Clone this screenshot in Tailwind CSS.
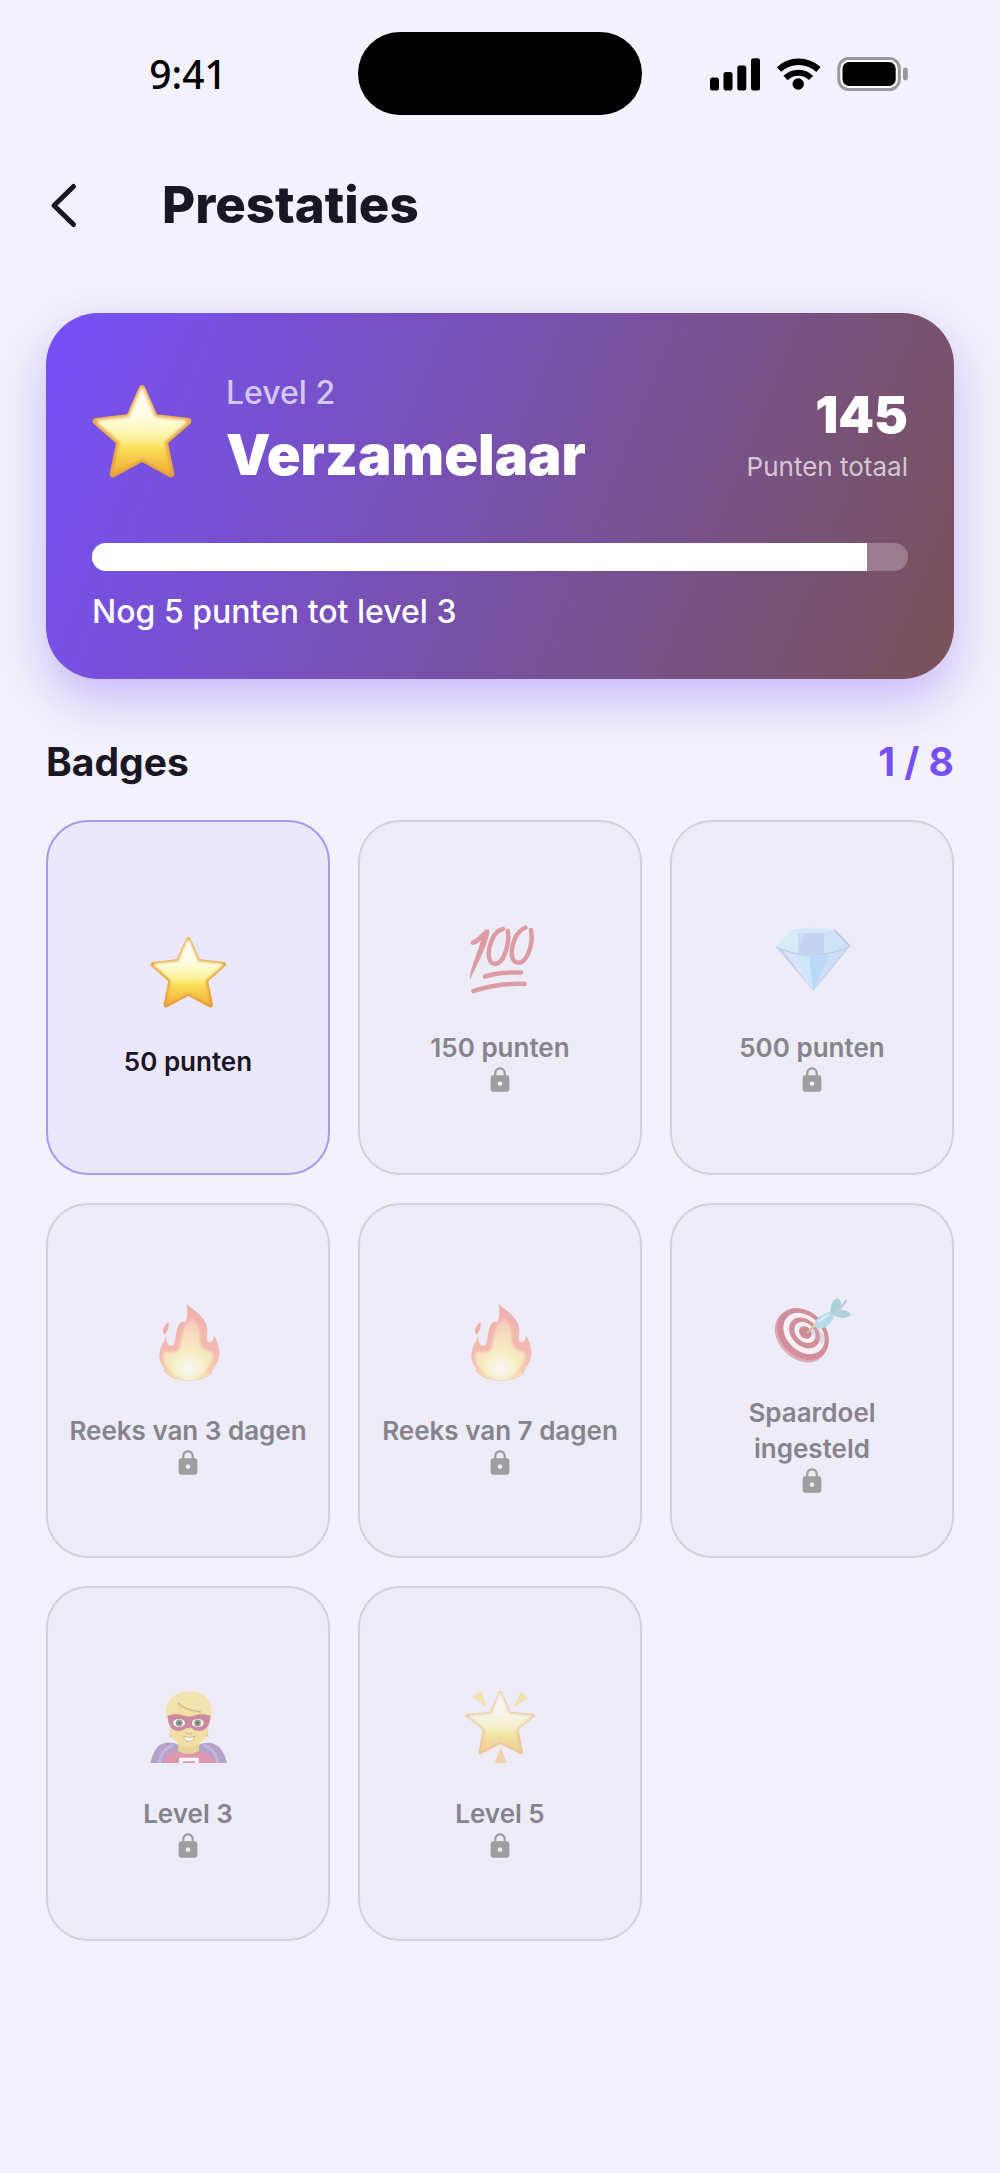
<!DOCTYPE html>
<html lang="nl">
<head>
    <meta charset="UTF-8">
    <meta name="viewport" content="width=device-width, initial-scale=1.0">
    <title>Prestaties</title>
    <script src="https://cdn.jsdelivr.net/npm/@tailwindcss/browser@4"></script>
</head>
<body class="min-h-screen bg-[#f3f1fb] font-['Inter',sans-serif] text-[#1a1625]">

    <!-- Status bar -->
    <div class="grid grid-cols-3 items-center gap-7 px-[46px] pt-8">
        <div class="text-center font-['Noto_Sans',sans-serif] text-[39px] leading-[83px] font-medium text-black">9:41</div>
        <div class="h-[83px] rounded-full bg-black"></div>
        <svg class="mx-auto h-[34px] w-[204px]" viewBox="0 0 204 34" aria-hidden="true">
            <rect x="0" y="20.5" width="9" height="13" rx="2.5"/>
            <rect x="13.5" y="15" width="9" height="18.5" rx="2.5"/>
            <rect x="27.3" y="8.5" width="9" height="25" rx="2.5"/>
            <rect x="41" y="1.3" width="9" height="32.2" rx="2.5"/>
            <path d="M69 12.5C80 2.2 97 2.2 108.5 12.5" fill="none" stroke="#000" stroke-width="6.5"/>
            <path d="M75.5 21C83 14 94 14 101 21" fill="none" stroke="#000" stroke-width="6"/>
            <circle cx="88.2" cy="27" r="5.7"/>
            <rect x="128.8" y="1.5" width="60.5" height="31" rx="10" fill="#fff" stroke="#9a999f" stroke-width="3"/>
            <rect x="132.5" y="5" width="53.2" height="24" rx="6.5"/>
            <rect x="193" y="10.5" width="4.8" height="13" rx="2.4" fill="#9a999f"/>
        </svg>
    </div>

    <!-- Header -->
    <header class="flex items-center gap-[84px] px-[46px] pt-[54px] pb-[72px]">
        <button type="button" aria-label="Terug" class="h-12 w-8 cursor-pointer">
            <svg class="h-12 w-8" viewBox="0 0 32 48" fill="none" stroke="#1a1625" stroke-width="5" stroke-linecap="round" stroke-linejoin="round">
                <path d="M27.5 5.5 8 24.500 27.5 43.5"/>
            </svg>
        </button>
        <h1 class="text-[51px] leading-[72px] font-extrabold">Prestaties</h1>
    </header>

    <main class="px-[46px] pb-14">

        <!-- Level card -->
        <section class="rounded-[52px] bg-linear-[112deg,#7650fa,#795257] p-[46px] text-white shadow-[0_20px_50px_rgba(118,80,250,0.35)]">
            <div class="flex h-36 items-center gap-8">
                <svg class="size-[102px] shrink-0" viewBox="1 0 78 78" aria-hidden="true">
                    <defs>
                        <linearGradient id="starFill" x1="0" y1="0" x2="0" y2="1">
                            <stop offset="0" stop-color="#fffdf0"/>
                            <stop offset=".35" stop-color="#fffde0"/>
                            <stop offset=".6" stop-color="#fdf29a"/>
                            <stop offset=".7" stop-color="#fae05a"/>
                            <stop offset="1" stop-color="#f2b23a"/>
                        </linearGradient>
                        <linearGradient id="starEdge" x1="0" y1="0" x2="0" y2="1">
                            <stop offset="0" stop-color="#edb04e"/>
                            <stop offset="1" stop-color="#e3a03c"/>
                        </linearGradient>
                        <filter id="soft" x="-10%" y="-10%" width="120%" height="120%">
                            <feGaussianBlur stdDeviation="1.3"/>
                        </filter>
                    </defs>
                    <g id="star" stroke-linejoin="round">
                        <path d="M39.3 6.500 49 28.5 74.5 31.5 56.5 47.5 61.5 72 39.3 60 17 72 22 47.5 4 31.5 29.500 28.5Z" fill="url(#starEdge)" stroke="url(#starEdge)" stroke-width="5"/>
                        <path d="M39.3 8 48.5 29.5 72 32 55 47 60 70 39.3 58.5 18.5 70 23.5 47 6.5 32 30 29.5Z" fill="url(#starFill)" stroke="url(#starFill)" stroke-width="3" filter="url(#soft)"/>
                    </g>
                </svg>
                <div class="min-w-0 flex-1">
                    <p class="mb-1 text-[32px] leading-11 font-medium text-white/70">Level 2</p>
                    <h2 class="text-[56px] leading-[72px] font-black">Verzamelaar</h2>
                </div>
                <div class="text-right">
                    <p class="text-[51px] leading-[72px] font-black">145</p>
                    <p class="text-[26px] leading-8 text-white/70">Punten totaal</p>
                </div>
            </div>
            <div class="mt-10 h-7 overflow-hidden rounded-full bg-white/25" role="progressbar" aria-label="Voortgang" aria-valuenow="95" aria-valuemin="0" aria-valuemax="100">
                <div class="h-full bg-white" style="width: 95%"></div>
            </div>
            <p class="mt-5 text-[32px] leading-[42px] font-medium">Nog 5 punten tot level 3</p>
        </section>

        <!-- Badges -->
        <div class="mt-[55px] mb-[30px] flex items-center justify-between">
            <h2 class="text-[39px] leading-14 font-bold">Badges</h2>
            <span class="text-[39px] leading-14 font-bold text-[#7650f5]">1 / 8</span>
        </div>

        <ul class="grid grid-cols-3 gap-7">
            <li class="flex aspect-[4/5] flex-col items-center justify-center rounded-[42px] border-2 border-[#a998f0] bg-[#ebe7fd] px-2 text-center">
                <div class="mb-4 flex h-28 items-center">
                    <svg class="size-[78px]" viewBox="0 0 78 78" aria-hidden="true"><use href="#star"/></svg>
                </div>
                <p class="text-[26px] leading-9 font-semibold">50 punten</p>
            </li>

            <li class="flex aspect-[4/5] flex-col items-center justify-center rounded-[42px] border-2 border-[#d3d1dc] bg-[#eeecf6] px-2 text-center text-[#85838d]">
                <div class="mb-4 flex h-28 items-center opacity-40">
                    <svg class="size-[78px]" viewBox="0 0 78 78" fill="none" stroke="#c4262a" stroke-width="4.5" stroke-linecap="round" stroke-linejoin="round" aria-hidden="true">
                        <path d="M9 60.5C8 53 14 41 20 21.5 18 23.5 15 25.5 12 26 9.5 26 9 23 11 21.500 17 19 20.500 13.500 25 10.500 27.500 9.500 29 12 28.200 14.500 24.500 30 18.500 41 13.500 51Z" fill="#c4262a" stroke="none"/>
                        <path d="M42 10C33 11.5 26.5 27 28 38 29.5 47 37 47 42 39 46.5 31 48 20 46.8 12"/>
                        <path d="M64.5 8.5C55 12 49.500 27 51 37 53 46 61 46 66 37 70 29 71.5 19 70 11"/>
                        <path d="M24 57.5C33 54.500 47 53 60 53.5"/>
                        <path d="M12.5 72C27 67.5 43 64 63.5 65"/>
                    </svg>
                </div>
                <p class="text-[26px] leading-9 font-semibold">150 punten</p>
                <svg class="size-7 text-[#9e9e9e]" viewBox="0 0 24 24" fill="currentColor" aria-label="Vergrendeld"><path id="lock" d="M18 8h-1V6c0-2.76-2.24-5-5-5S7 3.24 7 6v2H6c-1.1 0-2 .9-2 2v10c0 1.1.9 2 2 2h12c1.1 0 2-.9 2-2V10c0-1.1-.9-2-2-2zm-6 9c-1.1 0-2-.9-2-2s.9-2 2-2 2 .9 2 2-.9 2-2 2zm3.1-9H8.900V6c0-1.71 1.39-3.1 3.1-3.1s3.1 1.39 3.1 3.1v2z"/></svg>
            </li>

            <li class="flex aspect-[4/5] flex-col items-center justify-center rounded-[42px] border-2 border-[#d3d1dc] bg-[#eeecf6] px-2 text-center text-[#85838d]">
                <div class="mb-4 flex h-28 items-center opacity-45">
                    <svg class="size-[78px]" viewBox="0 0 78 78" aria-hidden="true">
                        <path d="M3 28 19.5 11Q40 6.5 61.5 11L77 27 40.3 72Z" fill="#a5dcfb"/>
                        <path d="M3 28 19.5 11 25.3 14.3V34Z" fill="#b4eef8"/>
                        <path d="M25.3 14.3H51V34.5Q38 36 25.3 34Z" fill="#8fb4ea"/>
                        <path d="M25.3 14.3 19.5 11Q40 6.5 61.5 11L51 14.3Z" fill="#b8e6fc"/>
                        <path d="M51 14.3 61.5 11 77 27Q65 33 51 34.5Z" fill="#a9d6fa"/>
                        <path d="M25.3 34 32 14.3 25.3 14.3Z" fill="#a4c9f2"/>
                        <path d="M3 28Q11 33 23.7 36L40.3 72Z" fill="#9cb0e4"/>
                        <path d="M10 31.5 23.7 36 40.3 72Z" fill="#bfdcf9"/>
                        <path d="M23.7 36Q40 38.5 56.3 36L40.3 72Z" fill="#7fc1fb"/>
                        <path d="M23.7 36 36 38 40.3 72Z" fill="#a8e1fb"/>
                        <path d="M56.3 36Q68 33 77 27L40.3 72Z" fill="#a3cdf8"/>
                        <path d="M72 31 77 27 40.3 72Z" fill="#8ca0dc"/>
                        <path d="M3 28Q40 45 77 27" fill="none" stroke="#829fce" stroke-width="1.1"/>
                        <path d="M61.5 11 77 27" stroke="#7688c4" stroke-width="1.1"/>
                    </svg>
                </div>
                <p class="text-[26px] leading-9 font-semibold">500 punten</p>
                <svg class="size-7 text-[#9e9e9e]" viewBox="0 0 24 24" fill="currentColor" aria-label="Vergrendeld"><use href="#lock"/></svg>
            </li>

            <li class="flex aspect-[4/5] flex-col items-center justify-center rounded-[42px] border-2 border-[#d3d1dc] bg-[#eeecf6] px-2 text-center text-[#85838d]">
                <div class="mb-4 flex h-28 items-center opacity-50">
                    <svg class="size-[78px] overflow-visible" viewBox="0 0 78 78" aria-hidden="true">
                        <defs>
                            <radialGradient id="flameGlow" gradientUnits="userSpaceOnUse" cx="40" cy="66" r="52">
                                <stop offset="0" stop-color="#ffffff"/>
                                <stop offset=".14" stop-color="#fffccb"/>
                                <stop offset=".34" stop-color="#fff08c"/>
                                <stop offset=".62" stop-color="#ffd08a"/>
                                <stop offset="1" stop-color="#fda078"/>
                            </radialGradient>
                            <linearGradient id="flameEdge" x1="0" y1="0" x2="0" y2="1">
                                <stop offset="0" stop-color="#f4766a"/>
                                <stop offset=".6" stop-color="#fb8a70"/>
                                <stop offset=".85" stop-color="#ffa869"/>
                                <stop offset="1" stop-color="#fff07a"/>
                            </linearGradient>
                        </defs>
                        <g id="flame">
                            <path d="M38 2.8C47 10 58 17 58 28 58 35 56.5 40 60 40.5 63.5 40.5 65 38 65.3 34.5 72 46 71.5 59 64 66 64 68 62 70 63 71 57 76 48 78.500 40 78.5 30 78.5 19 75 14 68 15 69 17 69 18 69 11 63 9.500 54 11.5 48 13 42 16 40 16.7 35 17 41 20 45 23 44 28 44 25 32 31 21 34 20 37 21 38 17 39 13 38.5 8 38 2.800Z" fill="url(#flameEdge)" stroke="#e0605a" stroke-opacity=".5" stroke-width=".8"/>
                            <path d="M43 16C49 22 52 28 51 36 50 44 54 48 62 50 67 52 62 63 57 68 52 75 47 77 40 77.5 31 77 24 73 20 67 14 61 13 54 16 49 21 52 28 51 30 47 34 38 31 26 43 16Z" fill="url(#flameGlow)" filter="url(#soft)"/>
                            <path d="M19.7 20C20 25 19 30 15.5 32.5 12.5 31 13.5 24 19.7 20Z" fill="#ee7568"/>
                        </g>
                    </svg>
                </div>
                <p class="text-[26px] leading-9 font-semibold">Reeks van 3 dagen</p>
                <svg class="size-7 text-[#9e9e9e]" viewBox="0 0 24 24" fill="currentColor" aria-label="Vergrendeld"><use href="#lock"/></svg>
            </li>

            <li class="flex aspect-[4/5] flex-col items-center justify-center rounded-[42px] border-2 border-[#d3d1dc] bg-[#eeecf6] px-2 text-center text-[#85838d]">
                <div class="mb-4 flex h-28 items-center opacity-50">
                    <svg class="size-[78px] overflow-visible" viewBox="0 0 78 78" aria-hidden="true"><use href="#flame"/></svg>
                </div>
                <p class="text-[26px] leading-9 font-semibold">Reeks van 7 dagen</p>
                <svg class="size-7 text-[#9e9e9e]" viewBox="0 0 24 24" fill="currentColor" aria-label="Vergrendeld"><use href="#lock"/></svg>
            </li>

            <li class="flex aspect-[4/5] flex-col items-center justify-center rounded-[42px] border-2 border-[#d3d1dc] bg-[#eeecf6] px-2 text-center text-[#85838d]">
                <div class="mb-4 flex h-28 items-center opacity-60">
                    <svg class="size-[78px] overflow-visible" viewBox="0 0 78 78" aria-hidden="true">
                        <ellipse cx="27.8" cy="52.5" rx="29.5" ry="22" transform="rotate(45 27.8 52.5)" fill="#a08a96"/>
                        <ellipse cx="28.5" cy="51.5" rx="29.5" ry="22.5" transform="rotate(45 28.5 51.5)" fill="#dc7f8c"/>
                        <ellipse cx="30" cy="50" rx="29" ry="22.5" transform="rotate(45 30 50)" fill="#c0505f"/>
                        <ellipse cx="31" cy="49.5" rx="23.5" ry="17.5" transform="rotate(45 31 49.5)" fill="#fbf4f6"/>
                        <ellipse cx="31.5" cy="49" rx="17.5" ry="13" transform="rotate(45 31.5 49)" fill="#c0505f"/>
                        <ellipse cx="32" cy="48.5" rx="12" ry="9" transform="rotate(45 32 48.5)" fill="#fbf4f6"/>
                        <ellipse cx="32.3" cy="48.5" rx="7" ry="5.5" transform="rotate(45 32.3 48.5)" fill="#b84a58"/>
                        <path d="M36 48 44 42 53 54 49 60Z" fill="#a8909c" fill-opacity=".35"/>
                        <path d="M34 49 43 40" stroke="#b99b68" stroke-width="1.8"/>
                        <path d="M39 43.5 42 38 45.5 42.5Z" fill="#f3d36a"/>
                        <path d="M59 29 67 25 73 17" fill="none" stroke="#b3b4cf" stroke-width="2.5" stroke-linecap="round"/>
                        <path d="M57.5 29C57 22 59 16 64.5 14 68.5 17 69.5 21 66.5 24.5L60.5 31Z" fill="#7fc2ca"/>
                        <path d="M59.5 31 67 26C71 25.5 75.500 27 78 30.5 76 33.5 71 34.5 66 33.5Z" fill="#84c0c8"/>
                        <path d="M42.5 43.5C41 37 44.500 33 50 30.5L57.5 27.5 61.5 31.5C59 38 55 43 49.5 44 46 45 44 44.500 42.5 43.5Z" fill="#90d3df"/>
                        <path d="M46 37 55 31" stroke="#c5eef5" stroke-width="2.5" stroke-linecap="round"/>
                    </svg>
                </div>
                <p class="text-[26px] leading-9 font-semibold">Spaardoel<br>ingesteld</p>
                <svg class="size-7 text-[#9e9e9e]" viewBox="0 0 24 24" fill="currentColor" aria-label="Vergrendeld"><use href="#lock"/></svg>
            </li>

            <li class="flex aspect-[4/5] flex-col items-center justify-center rounded-[42px] border-2 border-[#d3d1dc] bg-[#eeecf6] px-2 text-center text-[#85838d]">
                <div class="mb-4 flex h-28 items-center opacity-60">
                    <svg class="size-[78px]" viewBox="0 0 78 78" aria-hidden="true">
                        <path d="M20 28C18 40 24 49 20 53L25 51 24 55 31 50 50 50 56 55 55 51 60 52C56 48 63 38 60 28Z" fill="#dcb95c"/>
                        <path d="M1.5 78C4 68 7 61 13 59 18 57 25 57 29 60L50 60C56 57 62 57 67 60 73 63 76 70 78 78Z" fill="#8e74ac"/>
                        <path d="M10 78C12 69 16 62 25 60M69 78C67 69 63 62 54 60" fill="none" stroke="#a892c4" stroke-width="3"/>
                        <path d="M15 78C16 71 19 68 28 66.5L50 66.5C60 68 64 71 66 78Z" fill="#d65f7c"/>
                        <path d="M29 56H50V66C44 70 35 70 29 66Z" fill="#e9c462"/>
                        <path d="M32 78V74.5H48V78" fill="none" stroke="#fff" stroke-width="3.5"/>
                        <path d="M19.5 28C19 45 24 62 40 62S61 45 60.5 28C55 10 25 10 19.5 28Z" fill="#f5d772"/>
                        <path d="M17.5 35C16 27 17 19 21 15 26 8 35 5.500 43 6.5 54 7 61 13 62 22 63.5 28 62.5 32 61.5 35 59 30 57 28 53 27 44 26 34 24 29 19 29 24 24 26 20.5 31Z" fill="#f5df80"/>
                        <path d="M29 18C34 24 44 26 52 27" fill="none" stroke="#b8994c" stroke-width="1.5"/>
                        <path d="M18.5 31C24 28.500 31 28.500 36 31 39 32 41 32 44 31 49 28.500 56 28.500 61.5 31 61 40 57 46 50.5 46 45 46 43 42.500 40 42.5S35 46 29.5 46C23 46 19 40 18.5 31Z" fill="#b8466c"/>
                        <ellipse cx="30" cy="38" rx="6" ry="4" fill="#fff"/>
                        <ellipse cx="48.8" cy="38" rx="6" ry="4" fill="#fff"/>
                        <circle cx="30.2" cy="38" r="3.4" fill="#58764a"/>
                        <circle cx="48.6" cy="38" r="3.4" fill="#58764a"/>
                        <circle cx="30.2" cy="38" r="1.6" fill="#222"/>
                        <circle cx="48.6" cy="38" r="1.6" fill="#222"/>
                        <path d="M37 48Q40 50 43 48" fill="none" stroke="#d5a44c" stroke-width="1.5"/>
                        <path d="M34.5 51.5Q40 53.5 45.5 51.5 44 56.5 40 56.5T34.5 51.5Z" fill="#fff" stroke="#c09a58" stroke-width="1"/>
                    </svg>
                </div>
                <p class="text-[26px] leading-9 font-semibold">Level 3</p>
                <svg class="size-7 text-[#9e9e9e]" viewBox="0 0 24 24" fill="currentColor" aria-label="Vergrendeld"><use href="#lock"/></svg>
            </li>

            <li class="flex aspect-[4/5] flex-col items-center justify-center rounded-[42px] border-2 border-[#d3d1dc] bg-[#eeecf6] px-2 text-center text-[#85838d]">
                <div class="mb-4 flex h-28 items-center opacity-50">
                    <svg class="size-[78px]" viewBox="0 0 78 78" stroke-linejoin="round" aria-hidden="true">
                        <path d="M11.3 12.2Q15 8 20.7 6.2L25.7 22.2Z" fill="#f5dc70"/>
                        <path d="M59.7 6.8Q64 9 67 13L52.3 22.5Z" fill="#f5dc70"/>
                        <path d="M39.7 62 45.7 78H33.700Z" fill="#eebc60"/>
                        <path d="M39.3 7.5 48.5 28.5 72 30.5 55.5 44 60.5 67.5 39.3 57.5 19.5 67.5 23.5 44 6.5 30.5 30 28.5Z" fill="url(#starEdge)" stroke="url(#starEdge)" stroke-width="3.5"/>
                        <path d="M39.3 9 47.5 29.5 69 31.5 54 44 58.5 65.5 39.3 55.5 21 65.5 25 44 9.5 31.5 31 29.5Z" fill="url(#starFill)" stroke="url(#starFill)" stroke-width="2.5" filter="url(#soft)"/>
                    </svg>
                </div>
                <p class="text-[26px] leading-9 font-semibold">Level 5</p>
                <svg class="size-7 text-[#9e9e9e]" viewBox="0 0 24 24" fill="currentColor" aria-label="Vergrendeld"><use href="#lock"/></svg>
            </li>
        </ul>
    </main>

</body>
</html>
